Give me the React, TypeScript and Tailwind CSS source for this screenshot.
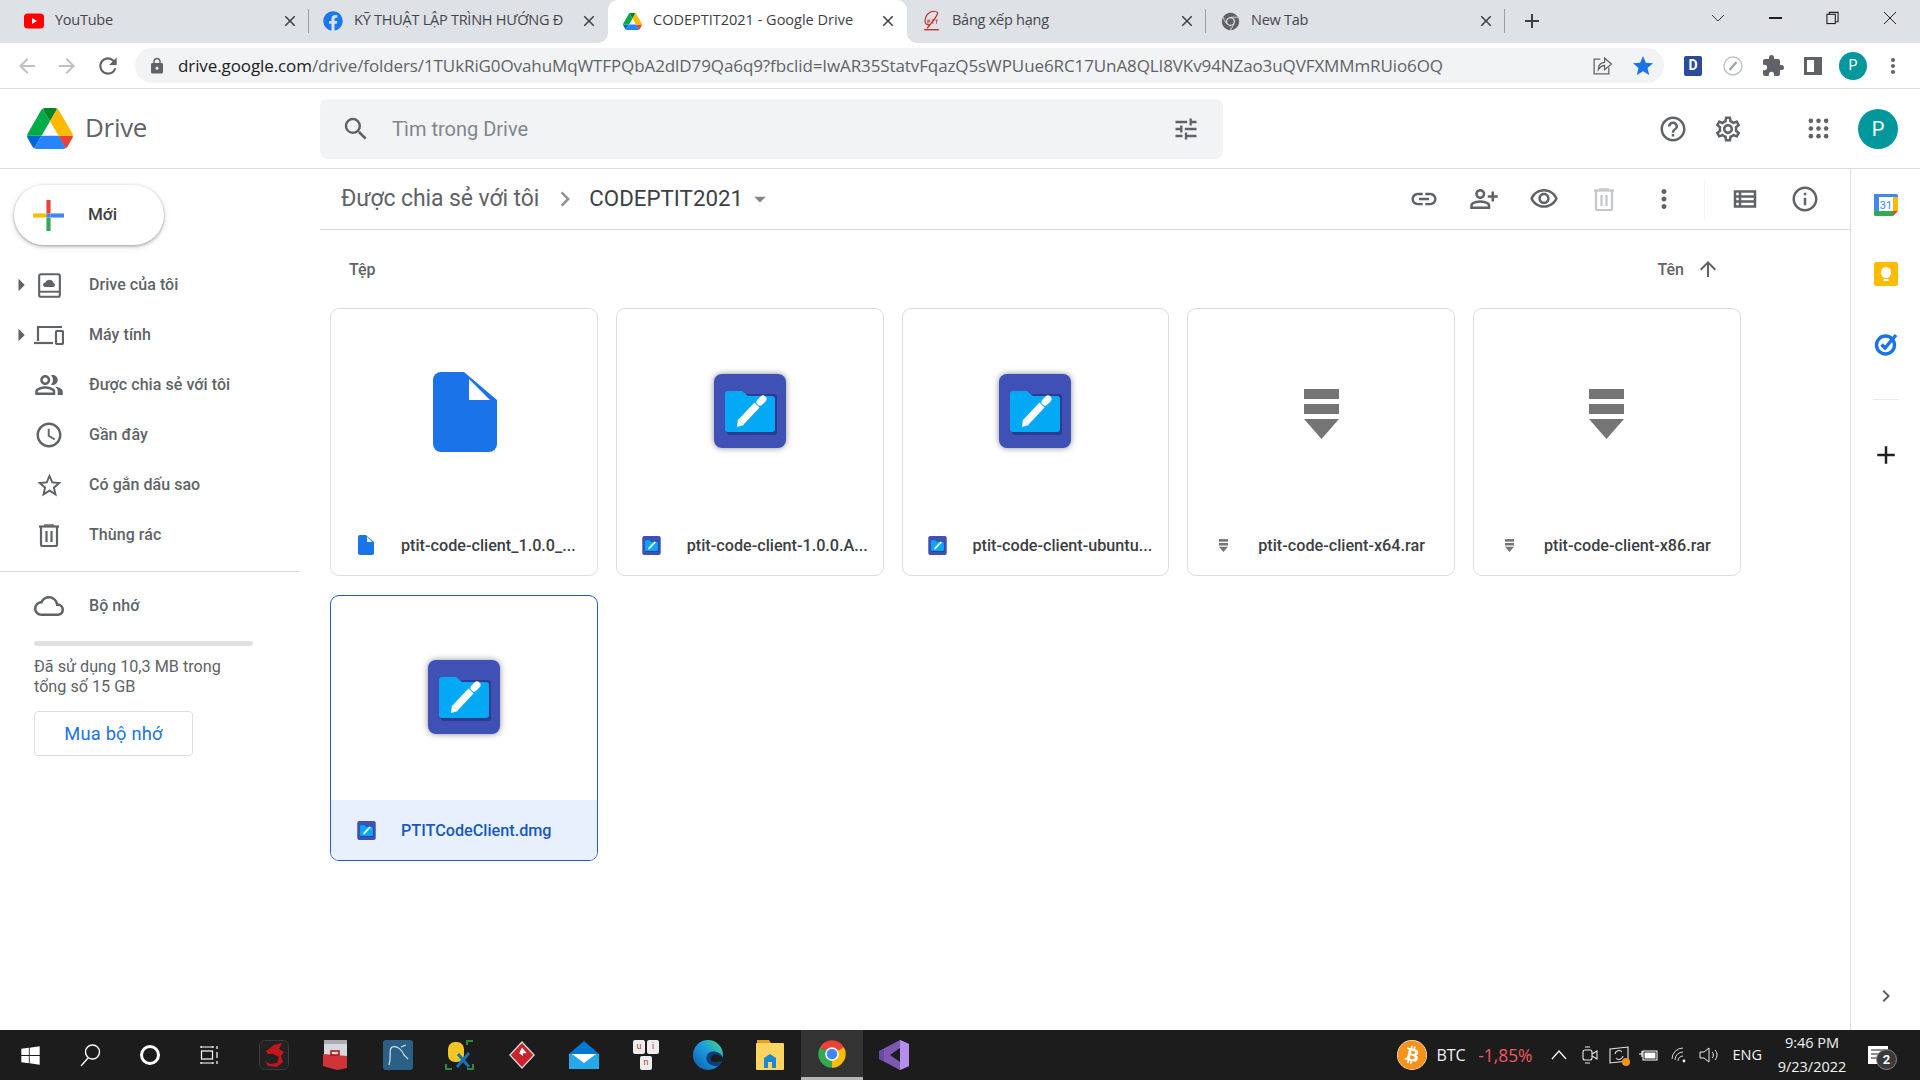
import React from "react";
import { MdSearch, MdOutlineTune, MdOutlineHelpOutline, MdOutlineSettings, MdLink, MdOutlinePersonAddAlt, MdOutlineVisibility, MdMoreVert, MdOutlineViewList, MdInfoOutline, MdArrowUpward, MdOutlineAccessTime, MdStarBorder, MdOutlineCloud, MdOutlinePeopleAlt, MdArrowRight, MdChevronRight, MdArrowDropDown, MdExtension, MdStar, MdArrowBack, MdArrowForward, MdRefresh, MdLock, MdClose, MdAdd, MdMoreVert as MdDots } from "react-icons/md";
import { FaFacebook, FaWindows, FaBitcoin } from "react-icons/fa";

function DriveLogo({ c = "w-[46px] h-[41px]" }: { c?: string }) {
  return (
    <svg viewBox="0 0 87.3 78" className={c}>
      <path d="m6.6 66.85 3.85 6.65c.8 1.4 1.95 2.5 3.3 3.3l13.75-23.8h-27.5c0 1.55.4 3.1 1.2 4.5z" fill="#0066da" />
      <path d="m43.65 25-13.75-23.8c-1.35.8-2.5 1.9-3.3 3.3l-25.4 44a9.06 9.06 0 0 0 -1.2 4.5h27.5z" fill="#00ac47" />
      <path d="m73.55 76.8c1.35-.8 2.5-1.9 3.3-3.3l1.6-2.75 7.65-13.25c.8-1.4 1.2-2.95 1.2-4.5h-27.502l5.852 11.5z" fill="#ea4335" />
      <path d="m43.65 25 13.75-23.8c-1.35-.8-2.9-1.2-4.5-1.2h-18.5c-1.6 0-3.15.45-4.5 1.2z" fill="#00832d" />
      <path d="m59.8 53h-32.3l-13.75 23.8c1.35.8 2.9 1.2 4.5 1.2h50.8c1.6 0 3.15-.45 4.5-1.2z" fill="#2684fc" />
      <path d="m73.4 26.5-12.7-22c-.8-1.4-1.95-2.5-3.3-3.3l-13.75 23.8 16.15 28h27.45c0-1.55-.4-3.1-1.2-4.5z" fill="#ffba00" />
    </svg>
  );
}

function ChromeIcon({ c, mono }: { c: string; mono?: boolean }) {
  return (
    <svg viewBox="0 0 48 48" className={c}>
      <path d="M24 24 L4.95 13 A22 22 0 0 1 43.05 13 Z" fill={mono ? "#5f6368" : "#ea4335"} />
      <path d="M24 24 L43.05 13 A22 22 0 0 1 24 46 Z" fill={mono ? "#5f6368" : "#fbbc04"} />
      <path d="M24 24 L24 46 A22 22 0 0 1 4.95 13 Z" fill={mono ? "#5f6368" : "#34a853"} />
      <circle cx="24" cy="24" r="11" fill="#fff" />
      <circle cx="24" cy="24" r="8.5" fill={mono ? "#5f6368" : "#4285f4"} />
      {mono && <path d="M24 13 H42 M14 30 L5 14 M33 30 L24 46" stroke="#fff" strokeWidth="1.6" />}
    </svg>
  );
}

function YouTubeIcon() {
  return (
    <svg viewBox="0 0 20 20" className="w-[20px] h-[20px]">
      <rect x="0" y="2.5" width="20" height="15" rx="3.5" fill="#f00" />
      <path d="M8 7 L13 10 L8 13 Z" fill="#fff" />
    </svg>
  );
}

function PtitIcon() {
  return (
    <svg viewBox="0 0 20 24" className="w-[19px] h-[22px]" fill="none" stroke="#c5221f">
      <path d="M17 3 C12 -1 4 3 3 11 C2.5 15 5 17 9 16 M17 3 C15 9 11 13 5 20" strokeWidth="1.2" />
      <path d="M2 21.5 H18" strokeWidth="1.4" />
      <path d="M6 15 V11 H8 V13 H6 M10 11 H13 M11.5 11 V15 M14 11 H17 M15.5 11 V15" strokeWidth=".8" />
    </svg>
  );
}

function TrashIcon({ color }: { color: string }) {
  return (
    <svg viewBox="0 0 20 23" className="w-[20px] h-[23px]" fill="none" stroke={color}>
      <path d="M0 2.5 H20" strokeWidth="2.2" />
      <path d="M6 2 V1 H14 V2" strokeWidth="1.6" />
      <path d="M2 3 V20.5 a1.5 1.5 0 0 0 1.5 1.5 H16.5 a1.5 1.5 0 0 0 1.5 -1.5 V3" strokeWidth="2.2" />
      <path d="M7.5 7 V18 M12.5 7 V18" strokeWidth="2.2" />
    </svg>
  );
}

type TabP = { icon: React.ReactNode; title: string; active?: boolean; divider?: boolean };
function Tab({ icon, title, active, divider }: TabP) {
  return (
    <div className={`relative w-[299px] h-[43px] flex items-center pl-[14px] pr-[13px] gap-[10px] ${active ? "bg-white rounded-t-[10px]" : ""}`}>
      <div className="w-[20px] h-[22px] flex items-center justify-center shrink-0 -mt-[1px]">{icon}</div>
      <div className={`flex-1 min-w-0 whitespace-nowrap text-[14.5px] pl-[1px] -mt-[3px] [font-family:'Open_Sans',sans-serif] ${active ? "text-[#3c4043] tracking-normal" : "text-[#45474b] tracking-[-0.25px]"}`}>{title}</div>
      <MdClose className="w-[18px] h-[18px] text-[#3c4043] shrink-0 -mr-[3px] ml-[1px] -mt-[1px]" />
      {divider && <div className="absolute right-0 top-[9px] h-[24px] w-px bg-[#9aa0a6]" />}
      {active && (
        <>
          <svg viewBox="0 0 10 10" className="absolute -left-[10px] bottom-0 w-[10px] h-[10px]"><path d="M10 0 V10 H0 A10 10 0 0 0 10 0 Z" fill="#fff" /></svg>
          <svg viewBox="0 0 10 10" className="absolute -right-[10px] bottom-0 w-[10px] h-[10px]"><path d="M0 0 V10 H10 A10 10 0 0 1 0 0 Z" fill="#fff" /></svg>
        </>
      )}
    </div>
  );
}

function TabStrip() {
  return (
    <div className="h-[43px] bg-[#dee1e6] flex pl-[10px] shrink-0">
      <Tab icon={<YouTubeIcon />} title="YouTube" divider />
      <Tab icon={<FaFacebook className="w-[20px] h-[20px] text-[#1877f2]" />} title="KỸ THUẬT LẬP TRÌNH HƯỚNG Đ" />
      <Tab active icon={<DriveLogo c="w-[19px] h-[17px]" />} title="CODEPTIT2021 - Google Drive" />
      <Tab icon={<PtitIcon />} title="Bảng xếp hạng" divider />
      <Tab icon={<ChromeIcon c="w-[19px] h-[19px]" mono />} title="New Tab" divider />
      <div className="w-[54px] flex items-center justify-center -mt-[1px]"><MdAdd className="w-[24px] h-[24px] text-[#3c4043]" /></div>
      <div className="flex-1 flex items-center justify-end pr-[1px] -mt-[7px]">
        <div className="w-[57.5px] flex justify-center"><svg viewBox="0 0 14 8" className="w-[14px] h-[8px]" fill="none" stroke="#3c4043" strokeWidth="1"><path d="M1 1 L7 7 L13 1" /></svg></div>
        <div className="w-[57.5px] flex justify-center"><div className="w-[13px] h-[1.5px] bg-[#202124]" /></div>
        <div className="w-[57.5px] flex justify-center"><svg viewBox="0 0 14 14" className="w-[13px] h-[14px]" fill="none" stroke="#202124" strokeWidth="1.2"><rect x="1" y="3" width="9" height="10" /><path d="M3.5 3 V1 H13 V11 H10" /></svg></div>
        <div className="w-[57.5px] flex justify-center"><svg viewBox="0 0 14 14" className="w-[14px] h-[14px]" fill="none" stroke="#202124" strokeWidth="1"><path d="M1 1 L13 13 M13 1 L1 13" /></svg></div>
      </div>
    </div>
  );
}

function Toolbar() {
  return (
    <div className="h-[46px] bg-white border-b border-[#dadce0] flex items-start pt-[5px] shrink-0">
      <div className="w-[135px] h-[35px] flex items-center pl-[15px] gap-[16px] shrink-0">
        <MdArrowBack className="w-[24px] h-[24px] text-[#bdc1c6]" />
        <MdArrowForward className="w-[24px] h-[24px] text-[#bdc1c6]" />
        <MdRefresh className="w-[26px] h-[26px] text-[#5f6368]" />
      </div>
      <div className="w-[1529px] h-[35px] rounded-full bg-[#f1f3f4] flex items-center pl-[13px] shrink-0">
        <MdLock className="w-[18px] h-[18px] text-[#5f6368] shrink-0" />
        <div className="ml-[12px] flex-1 whitespace-nowrap text-[17px] tracking-[-0.1px] [font-family:'Open_Sans',sans-serif] text-[#5f6368]"><span className="text-[#202124]">drive.google.com</span>/drive/folders/1TUkRiG0OvahuMqWTFPQbA2dlD79Qa6q9?fbclid=IwAR35StatvFqazQ5sWPUue6RC17UnA8QLI8VKv94NZao3uQVFXMMmRUio6OQ</div>
        <svg viewBox="0 0 20 20" className="w-[21px] h-[21px] mr-[18px] shrink-0" fill="none" stroke="#5f6368" strokeWidth="1.2"><path d="M8 4 H2 V18 H16 V12" /><path d="M6 14 C6 9 9 7 12 7 V3 L18.5 8.5 L12 14 V10 C9.5 10 7.5 11.5 6 14 Z" /></svg>
        <MdStar className="w-[24px] h-[24px] text-[#1a73e8] mr-[9px] shrink-0" />
      </div>
      <div className="flex-1 h-[35px] flex items-center pl-[9px]">
        <div className="w-[40px] flex justify-center"><div className="w-[18px] h-[20px] rounded-[2px] bg-[#2c4a9a] text-white text-[14px] font-bold flex items-center justify-center">D</div></div>
        <div className="w-[40px] flex justify-center">
          <svg viewBox="0 0 20 20" className="w-[20px] h-[20px]"><circle cx="10" cy="10" r="9" fill="#fff" stroke="#bdc1c6" strokeWidth="1.4" /><path d="M6.5 14 L13.5 6" stroke="#9aa0a6" strokeWidth="2" /></svg>
        </div>
        <div className="w-[40px] flex justify-center"><MdExtension className="w-[24px] h-[24px] text-[#5f6368]" /></div>
        <div className="w-[40px] flex justify-center"><div className="w-[18px] h-[18px] border-[3px] border-[#5f6368] bg-[linear-gradient(90deg,#fff_60%,#5f6368_60%)]" /></div>
        <div className="w-[40px] flex justify-center"><div className="w-[28px] h-[28px] rounded-full bg-[#00979d] text-white text-[14px] flex items-center justify-center">P</div></div>
        <div className="w-[40px] flex justify-center"><MdDots className="w-[24px] h-[24px] text-[#5f6368]" /></div>
      </div>
    </div>
  );
}

function AppsIcon() {
  return (
    <svg viewBox="0 0 22 22" className="w-[21px] h-[21px]" fill="#5f6368">
      {[3, 11, 19].flatMap((y) => [3, 11, 19].map((x) => <circle key={`${x}-${y}`} cx={x} cy={y} r="2.4" />))}
    </svg>
  );
}

function Header() {
  return (
    <div className="h-[80px] bg-white border-b border-[#dadce0] flex items-center shrink-0">
      <div className="w-[320px] flex items-center pl-[27px] gap-[12px] shrink-0">
        <DriveLogo />
        <span className="text-[26px] -mt-[2px] text-[#5f6368] tracking-[-0.3px] [font-family:'Open_Sans',sans-serif]">Drive</span>
      </div>
      <div className="w-[903px] h-[60px] rounded-[8px] bg-[#f1f3f4] flex items-center pl-[21px] pr-[23px] shrink-0">
        <MdSearch className="w-[30px] h-[30px] text-[#5f6368]" />
        <span className="ml-[21px] flex-1 text-[20px] text-[#80868b]">Tìm trong Drive</span>
        <MdOutlineTune className="w-[28px] h-[28px] text-[#5f6368]" />
      </div>
      <div className="flex-1 flex items-center pl-[435px]">
        <MdOutlineHelpOutline className="w-[30px] h-[30px] text-[#5f6368]" />
        <MdOutlineSettings className="w-[30px] h-[30px] text-[#5f6368] ml-[25px]" />
        <div className="ml-[65px]"><AppsIcon /></div>
        <div className="ml-[29px] w-[40px] h-[40px] rounded-full bg-[#00979d] text-white text-[20px] flex items-center justify-center">P</div>
      </div>
    </div>
  );
}

function DriveNavIcon() {
  return (
    <svg viewBox="0 0 24 26" className="w-[23px] h-[25px]" fill="none">
      <rect x="1.2" y="1.2" width="21.6" height="23.6" rx="2" stroke="#5f6368" strokeWidth="2.2" />
      <path d="M1.5 19.5 H22.5" stroke="#5f6368" strokeWidth="2" />
      <path d="M7 14.5 a2.4 2.4 0 0 1 .6-4.7 a4.5 4.5 0 0 1 8.6 .6 a2.1 2.1 0 0 1 -.2 4.1 z" fill="#5f6368" />
    </svg>
  );
}

function DevicesIcon() {
  return (
    <svg viewBox="0 0 30 20" className="w-[30px] h-[20px]" fill="none" stroke="#5f6368" strokeWidth="2.2">
      <path d="M4 16 V2 H28" />
      <path d="M0 18 H19" />
      <rect x="22" y="6" width="7" height="13" rx="1" />
    </svg>
  );
}

function NavRow({ icon, label, arrow }: { icon: React.ReactNode; label: string; arrow?: boolean }) {
  return (
    <div className="h-[50px] flex items-center">
      <div className="w-[34px] flex justify-end pr-[3px]">{arrow && <MdArrowRight className="w-[30px] h-[30px] text-[#5f6368] -mr-[5px]" />}</div>
      <div className="w-[30px] flex justify-center">{icon}</div>
      <span className="ml-[25px] text-[16px] font-medium text-[#5f6368] tracking-[0.05px]">{label}</span>
    </div>
  );
}

function Sidebar() {
  return (
    <div className="w-[320px] shrink-0 bg-white">
      <div className="ml-[14px] mt-[16px] w-[150px] h-[60px] rounded-full bg-white shadow-[0_1px_3px_rgba(60,64,67,.45),0_2px_6px_rgba(60,64,67,.15)] flex items-center pl-[19px] gap-[24px]">
        <svg viewBox="0 0 30 30" className="w-[31px] h-[31px]">
          <path d="M13 0 H17 V13 H13 Z" fill="#ea4335" />
          <path d="M17 13 H30 V17 H17 Z" fill="#4285f4" />
          <path d="M13 17 H17 V30 H13 Z" fill="#34a853" />
          <path d="M0 13 H13 V17 H0 Z" fill="#fbbc04" />
          <path d="M13 13 H17 V17 H13 Z" fill="#4285f4" />
        </svg>
        <span className="text-[17px] font-medium text-[#3c4043]">Mới</span>
      </div>
      <div className="mt-[15px]">
        <NavRow arrow icon={<DriveNavIcon />} label="Drive của tôi" />
        <NavRow arrow icon={<DevicesIcon />} label="Máy tính" />
        <NavRow icon={<MdOutlinePeopleAlt className="w-[30px] h-[30px] text-[#5f6368]" />} label="Được chia sẻ với tôi" />
        <NavRow icon={<MdOutlineAccessTime className="w-[30px] h-[30px] text-[#5f6368]" />} label="Gần đây" />
        <NavRow icon={<MdStarBorder className="w-[29px] h-[29px] text-[#5f6368]" />} label="Có gắn dấu sao" />
        <NavRow icon={<TrashIcon color="#5f6368" />} label="Thùng rác" />
      </div>
      <div className="mt-[11px] w-[300px] h-px bg-[#dadce0]" />
      <div className="mt-[9px]">
        <NavRow icon={<MdOutlineCloud className="w-[32px] h-[32px] text-[#5f6368]" />} label="Bộ nhớ" />
      </div>
      <div className="ml-[34px] mt-[10px] w-[219px] h-[5px] rounded-full bg-[#e0e0e0]" />
      <div className="ml-[34px] mt-[11px] text-[16.2px] leading-[19.5px] text-[#5f6368] w-[230px]">Đã sử dụng 10,3 MB trong<br />tổng số 15 GB</div>
      <div className="ml-[34px] mt-[15px] w-[159px] h-[45px] rounded-[4px] border border-[#dadce0] flex items-center justify-center text-[#1a73e8] text-[18.3px] tracking-[0.2px]">Mua bộ nhớ</div>
    </div>
  );
}

function AppIcon({ c }: { c: string }) {
  return (
    <svg viewBox="0 0 72 74" className={c}>
      <rect width="72" height="74" rx="8" fill="#3f51b5" />
      <rect x="13" y="20" width="50" height="41" rx="3" fill="#2c3a8f" />
      <path d="M11 20 a3 3 0 0 1 3-3 h14 l6 5 h24 a3 3 0 0 1 3 3 v30 a3 3 0 0 1 -3 3 h-44 a3 3 0 0 1 -3-3 z" fill="#03a9f4" />
      <path d="M27 48 L43 31" stroke="#fff" strokeWidth="7" />
      <path d="M23 53 L24 45 L30 51 Z" fill="#fff" />
      <path d="M46 28 L49 25" stroke="#fff" strokeWidth="7" strokeLinecap="round" />
    </svg>
  );
}

function DocIcon({ c }: { c: string }) {
  return (
    <svg viewBox="0 0 64 80" className={c}>
      <path d="M8 0 H31 L64 28 V72 a8 8 0 0 1 -8 8 H8 a8 8 0 0 1 -8 -8 V8 a8 8 0 0 1 8 -8 z" fill="#1a73e8" />
      <path d="M36 7 V28 H57 Z" fill="#fff" />
    </svg>
  );
}

function RarIcon({ c }: { c: string }) {
  return (
    <svg viewBox="0 0 35 50" className={c} fill="#757575">
      <rect width="35" height="10" />
      <rect y="15" width="35" height="10" />
      <path d="M0 30 H35 L17.5 50 Z" />
    </svg>
  );
}

type CardP = { kind: "doc" | "app" | "rar"; name: string; selected?: boolean };
function Card({ kind, name, selected }: CardP) {
  return (
    <div className={`rounded-[9px] bg-white overflow-hidden flex flex-col ${selected ? "h-[266px] border-[1.5px] border-[#1a62c4]" : "h-[268px] border border-[#dadce0]"}`}>
      <div className="flex-1 flex items-center justify-center">
        {kind === "doc" && <DocIcon c="w-[64px] h-[80px] ml-[3px]" />}
        {kind === "app" && <AppIcon c="w-[74px] h-[74px] -mt-[2px] drop-shadow-[0_0_3px_rgba(0,0,0,.45)]" />}
        {kind === "rar" && <RarIcon c="w-[35px] h-[50px] mt-[4px]" />}
      </div>
      <div className={`h-[60px] flex items-center pl-[17px] pr-[10px] ${selected ? "bg-[#e8f0fe]" : ""}`}>
        <div className="w-[36px] flex justify-center shrink-0">
          {kind === "doc" && <DocIcon c="w-[16px] h-[20px]" />}
          {kind === "app" && <AppIcon c="w-[19px] h-[19px]" />}
          {kind === "rar" && <RarIcon c="w-[9px] h-[13px]" />}
        </div>
        <div className={`ml-[17px] mt-[2px] whitespace-nowrap text-[16.2px] font-medium ${selected ? "text-[#185abc]" : "text-[#3c4043]"}`}>{name}</div>
      </div>
    </div>
  );
}

function Action({ children }: { children: React.ReactNode }) {
  return <div className="w-[60px] flex justify-center">{children}</div>;
}

function Content() {
  const ic = "w-[30px] h-[30px] text-[#5f6368]";
  return (
    <div className="flex-1 min-w-0 bg-white">
      <div className="h-[61px] border-b border-[#dadce0] flex items-center pl-[21px]">
        <span className="text-[23px] text-[#5f6368] tracking-[-0.1px]">Được chia sẻ với tôi</span>
        <MdChevronRight className="w-[30px] h-[30px] text-[#8f9398] ml-[11px]" />
        <span className="ml-[9px] text-[22.3px] text-[#3c4043]">CODEPTIT2021</span>
        <MdArrowDropDown className="w-[28px] h-[28px] text-[#80868b] ml-[3px]" />
        <div className="flex-1" />
        <Action><MdLink className={ic} /></Action>
        <Action><MdOutlinePersonAddAlt className={ic} /></Action>
        <Action><MdOutlineVisibility className={ic} /></Action>
        <Action><TrashIcon color="#c4c7c9" /></Action>
        <Action><MdMoreVert className={ic} /></Action>
        <div className="w-[21px] flex justify-center"><div className="w-px h-[40px] bg-[#f1f3f4]" /></div>
        <Action><MdOutlineViewList className={ic} /></Action>
        <Action><MdInfoOutline className={ic} /></Action>
        <div className="w-[15px]" />
      </div>
      <div className="mt-[20px] h-[40px] flex items-center justify-between pl-[29px] pr-[130px]">
        <span className="text-[16px] font-medium text-[#5f6368]">Tệp</span>
        <div className="flex items-center gap-[12px]">
          <span className="text-[16px] font-medium text-[#5f6368]">Tên</span>
          <MdArrowUpward className="w-[24px] h-[24px] text-[#5f6368] -mt-[2px]" />
        </div>
      </div>
      <div className="ml-[10px] mt-[18px] grid grid-cols-[repeat(5,267.75px)] gap-x-[18px] gap-y-[19px]">
        <Card kind="doc" name="ptit-code-client_1.0.0_..." />
        <Card kind="app" name="ptit-code-client-1.0.0.A..." />
        <Card kind="app" name="ptit-code-client-ubuntu..." />
        <Card kind="rar" name="ptit-code-client-x64.rar" />
        <Card kind="rar" name="ptit-code-client-x86.rar" />
        <Card kind="app" name="PTITCodeClient.dmg" selected />
      </div>
    </div>
  );
}

function SidePanel() {
  return (
    <div className="w-[70px] shrink-0 border-l border-[#dadce0] bg-white flex flex-col items-center">
      <div className="h-[70px] flex items-center justify-center">
        <svg viewBox="0 0 24 24" className="w-[24px] h-[24px]">
          <rect width="24" height="24" rx="2" fill="#fff" />
          <path d="M0 4 a2 2 0 0 1 2-2 H22 a2 2 0 0 1 2 2 V5 H0 Z" fill="#4285f4" />
          <path d="M0 2 H5 V24 H2 a2 2 0 0 1 -2-2 Z" fill="#4285f4" />
          <path d="M19 5 H24 V19 H19 Z" fill="#fbbc04" />
          <path d="M0 19 H19 V24 H2 a2 2 0 0 1 -2-2 Z" fill="#34a853" />
          <path d="M19 19 H24 L19 24 Z" fill="#ea4335" />
          <text x="12" y="16.5" textAnchor="middle" fontSize="11" fontFamily="Roboto" fill="#4285f4">31</text>
        </svg>
      </div>
      <div className="h-[70px] flex items-center justify-center">
        <svg viewBox="0 0 24 24" className="w-[24px] h-[24px]">
          <rect width="24" height="24" rx="2" fill="#fbbc04" />
          <ellipse cx="12" cy="10.5" rx="5" ry="5.5" fill="#fff" />
          <rect x="9.5" y="17" width="5" height="2" fill="#fff" />
        </svg>
      </div>
      <div className="h-[70px] flex items-center justify-center">
        <svg viewBox="0 0 24 24" className="w-[24px] h-[24px]" fill="none">
          <circle cx="11.5" cy="13" r="9" stroke="#1a73e8" strokeWidth="3.4" />
          <path d="M7.5 12.5 L11 16 L22 3" stroke="#1a73e8" strokeWidth="3.4" />
        </svg>
      </div>
      <div className="mt-[20px] w-[26px] h-px bg-[#e8eaed]" />
      <div className="mt-[35px] h-[40px] flex items-center"><MdAdd className="w-[30px] h-[30px] text-[#202124]" /></div>
      <div className="mt-auto mb-[14px] h-[40px] flex items-center"><MdChevronRight className="w-[24px] h-[24px] text-[#5f6368]" /></div>
    </div>
  );
}

const Item = ({ children, active }: { children: React.ReactNode; active?: boolean }) => (
  <div className={`w-[62px] h-[50px] flex items-center justify-center shrink-0 ${active ? "bg-[#333333] border-b-[3px] border-[#b5b5b5]" : ""}`}>{children}</div>
);

function Taskbar() {
  const tw = "[font-family:'Open_Sans',sans-serif] text-[#f2f2f2]";
  return (
    <div className="h-[50px] bg-[#1c1c1c] flex items-center shrink-0">
      <div className="w-[60px] flex justify-center"><FaWindows className="w-[21px] h-[21px] text-white" /></div>
      <div className="w-[60px] flex justify-center">
        <svg viewBox="0 0 22 24" className="w-[22px] h-[24px]" fill="none" stroke="#fff" strokeWidth="1.4"><circle cx="13.5" cy="9" r="7" /><path d="M9 15 L2 23" /></svg>
      </div>
      <div className="w-[60px] flex justify-center"><div className="w-[20px] h-[20px] rounded-full border-[3px] border-white" /></div>
      <div className="w-[60px] flex justify-center">
        <svg viewBox="0 0 20 20" className="w-[20px] h-[20px]" fill="none" stroke="#fff" strokeWidth="1.2"><path d="M1 2 H13 M1 18 H13 M1 1 V3 M13 1 V3 M1 17 V19 M13 17 V19" /><rect x="1.5" y="6" width="11" height="8" /><path d="M17 1 V4 M17 7 V13 M17 16 V19" /></svg>
      </div>
      <div className="ml-[3px] flex">
        <Item>
          <svg viewBox="0 0 30 30" className="w-[30px] h-[30px]"><rect x=".5" y=".5" width="29" height="29" rx="5" fill="#222" stroke="#3a3a3a" /><path d="M7 11 L15 5 L23 3 L20 9 L25 12 L22 16 L24 22 L18 27 L9 26 L6 21 L11 24 L18 23 L20 17 L14 14 L9 14 Z" fill="#c3161c" /></svg>
        </Item>
        <Item>
          <svg viewBox="0 0 30 30" className="w-[30px] h-[30px]"><rect x="3" y="0" width="23" height="20" fill="#d5d8dc" /><rect x="3" y="0" width="23" height="4" fill="#a9adb1" /><path d="M2 14 L26 16 V28 L16 30 L2 26 Z" fill="#d13438" /><rect x="10" y="11" width="8" height="4" fill="none" stroke="#a11" strokeWidth="1.5" /></svg>
        </Item>
        <Item>
          <svg viewBox="0 0 30 30" className="w-[30px] h-[30px]"><rect width="30" height="30" rx="3" fill="#2a5f86" /><path d="M6 25 C9 15 5 10 9 7 C14 5 19 10 21 15 L25 19 M18 7 L23 5" fill="none" stroke="#d8e4ec" strokeWidth="1.2" /></svg>
        </Item>
        <Item>
          <svg viewBox="0 0 30 30" className="w-[30px] h-[30px]"><rect x="3" y="2" width="16" height="20" rx="7" fill="#f3c623" /><path d="M22 5 V1 H28 M1 24 V29 H7 M28 24 V29 H22" fill="none" stroke="#2e8b3a" strokeWidth="2" /><path d="M12 27 L24 13 M24 27 L13 14" stroke="#1672b8" strokeWidth="3" /></svg>
        </Item>
        <Item>
          <svg viewBox="0 0 28 30" className="w-[26px] h-[30px]"><path d="M14 0 L28 15 L14 30 L0 15 Z" fill="#d8d8d8" /><path d="M14 2 L26 15 L14 28 L2 15 Z" fill="#c8242d" /><path d="M14 7 L19 13 L15 13 L15 16 L11 13 Z" fill="#fff" /></svg>
        </Item>
        <Item>
          <svg viewBox="0 0 30 28" className="w-[30px] h-[28px]"><path d="M15 0 L30 13 V28 H0 V13 Z" fill="#0078d4" /><rect y="13" width="30" height="15" fill="#28a8ea" /><path d="M3 13 H27 L15 22 Z" fill="#fff" /></svg>
        </Item>
        <Item>
          <div className="grid grid-cols-2 gap-[2px] [font-family:Roboto,sans-serif] text-[9px] text-[#c0392b] text-center leading-[13px]">
            <div className="w-[12px] h-[14px] bg-[#eee] rounded-[2px]">u</div>
            <div className="w-[12px] h-[14px] bg-[#eee] rounded-[2px]">i</div>
            <div className="col-span-2 justify-self-center w-[12px] h-[14px] bg-[#eee] rounded-[2px]">n</div>
          </div>
        </Item>
        <Item>
          <svg viewBox="0 0 30 30" className="w-[30px] h-[30px]">
            <defs><linearGradient id="edgeg" x1="0" y1="1" x2="1" y2="0"><stop offset="0" stopColor="#0c59a4" /><stop offset=".55" stopColor="#1b9de2" /><stop offset="1" stopColor="#50d678" /></linearGradient></defs>
            <circle cx="15" cy="15" r="15" fill="url(#edgeg)" />
            <path d="M30 17 C27 11 17 9 14 15 C11 22 18 27 25 26 C28 23 30 20 30 17 Z" fill="#0a3e78" />
            <path d="M30 19 C28 14 20 13 18 17 C17 20 19 22 22 22 L30 21 Z" fill="#1c1c1c" />
          </svg>
        </Item>
        <Item>
          <svg viewBox="0 0 28 30" className="w-[28px] h-[30px]"><path d="M1 0 H13 L15 3 H1 Z" fill="#e5a21a" /><rect x="0" y="3" width="28" height="27" rx="1" fill="#fcd462" /><path d="M8 18 L14 14 L20 18 V28 H8 Z" fill="#1e88d8" /><rect x="12" y="22" width="4" height="6" fill="#fcd462" /></svg>
        </Item>
        <Item active><ChromeIcon c="w-[30px] h-[30px]" /></Item>
        <Item>
          <svg viewBox="0 0 30 30" className="w-[30px] h-[30px]"><path d="M21 0 L30 4 V26 L21 30 L0 19 V11 Z" fill="#7e57b2" /><path d="M21 0 L30 4 V26 L21 30 Z" fill="#b48ee8" /><path d="M21 8 V22 L11 15 Z" fill="#1c1c1c" /><path d="M0 11 L5 9 L5 21 L0 19 Z" fill="#6b49a0" /></svg>
        </Item>
      </div>
      <div className="flex-1" />
      <div className="flex items-center">
        <FaBitcoin className="w-[30px] h-[30px] text-[#f7931a] bg-white rounded-full" />
        <span className={`ml-[9.5px] text-[16px] ${tw}`}>BTC</span>
        <span className={`ml-[12.5px] text-[17.4px] [font-family:'Open_Sans',sans-serif] text-[#ee5a5f]`}>-1,85%</span>
        <div className="ml-[12px] w-[30px] flex justify-center">
          <svg viewBox="0 0 16 10" className="w-[16px] h-[10px]" fill="none" stroke="#fff" strokeWidth="1.3"><path d="M1 9 L8 1 L15 9" /></svg>
        </div>
        <div className="w-[30px] flex justify-center ml-[1px] -mr-[1px]">
          <svg viewBox="0 0 16 18" className="w-[16px] h-[18px]" fill="none" stroke="#e8e8e8" strokeWidth="1.1"><rect x="1" y="4" width="9" height="10" rx="2" /><path d="M10 8 L15 5 V13 L10 10 M3 1 H8 M3 17 H8" /></svg>
        </div>
        <div className="relative w-[30px] flex justify-center">
          <svg viewBox="0 0 20 18" className="w-[20px] h-[18px]" fill="none" stroke="#e8e8e8" strokeWidth="1.1"><path d="M1 3 L19 1 V15 L1 17 Z" /><path d="M6 8 a4 4 0 0 1 7 -2 M14 10 a4 4 0 0 1 -7 2" /></svg>
          <div className="absolute right-[4px] -bottom-[2px] w-[8px] h-[8px] rounded-full bg-[#f7931a]" />
        </div>
        <div className="w-[30px] flex justify-center">
          <svg viewBox="0 0 20 12" className="w-[20px] h-[12px]"><path d="M0 5 H3 M3 2 V8" stroke="#fff" strokeWidth="1.2" /><rect x="4" y="2" width="14" height="9" fill="none" stroke="#fff" strokeWidth="1" /><rect x="5.5" y="3.5" width="11" height="6" fill="#fff" /></svg>
        </div>
        <div className="w-[30px] flex justify-center">
          <svg viewBox="0 0 16 16" className="w-[16px] h-[16px]" fill="none" stroke="#d8d8d8" strokeWidth="1"><path d="M1 12 A11 11 0 0 1 12 1 M4 13 A8 8 0 0 1 12 5 M7 14 A5 5 0 0 1 12 9" /><circle cx="13" cy="14" r="1.4" fill="#fff" stroke="none" /></svg>
        </div>
        <div className="w-[30px] flex justify-center">
          <svg viewBox="0 0 20 16" className="w-[20px] h-[16px]" fill="none" stroke="#e8e8e8" strokeWidth="1"><path d="M1 5 H5 L10 1 V15 L5 11 H1 Z" /><path d="M13 5 a4 4 0 0 1 0 6 M16 3 a7 7 0 0 1 0 10" /></svg>
        </div>
        <span className={`ml-[8px] text-[14.5px] ${tw}`}>ENG</span>
        <div className={`ml-[10px] w-[80px] text-center text-[14.5px] leading-[24px] ${tw}`}>9:46 PM<br />9/23/2022</div>
        <div className="relative ml-[11px] w-[30px] h-[30px] flex justify-center items-center">
          <svg viewBox="0 0 20 18" className="w-[20px] h-[18px]"><rect width="20" height="18" fill="#fff" /><path d="M3 4 H17 M3 8 H17 M3 12 H13" stroke="#1c1c1c" strokeWidth="1.2" /></svg>
          <div className="absolute -right-[4px] bottom-0 w-[21px] h-[21px] rounded-full bg-[#3a3a3a] border border-[#888] text-white text-[13px] font-bold flex items-center justify-center">2</div>
        </div>
        <div className="w-[27px]" />
      </div>
    </div>
  );
}

export default function App() {
  return (
    <div className="w-[1920px] h-[1080px] overflow-hidden flex flex-col bg-white [font-family:Roboto,sans-serif]">
      <TabStrip />
      <Toolbar />
      <Header />
      <div className="flex-1 min-h-0 flex">
        <Sidebar />
        <Content />
        <SidePanel />
      </div>
      <Taskbar />
    </div>
  );
}
